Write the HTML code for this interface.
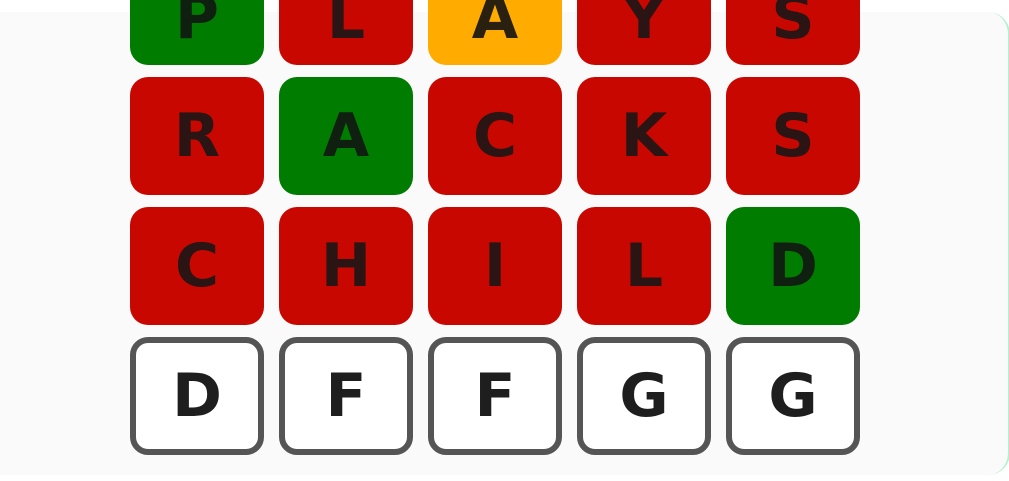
<!DOCTYPE html>
<html><head><style>
html,body{margin:0;padding:0;width:1009px;height:481px;overflow:hidden;background:#fff;}
.card{position:absolute;left:-20px;top:12px;width:1028px;height:463px;background:#fafafa;border-radius:22px;border-right:2px solid #b4f0cc;}
.t{position:absolute;width:134px;height:118px;border-radius:18px;display:flex;align-items:center;justify-content:center;font-family:"DejaVu Sans","Liberation Sans",sans-serif;font-weight:bold;font-size:60px;color:#2a1414;box-sizing:border-box;}
.g{background:#007c00;color:#102010}
.r{background:#c80800;}
.o{background:#ffab00;color:#2a2010}
.e{background:#fff;border:6px solid #555;color:#1e1e1e;}
.top{padding-top:24px;}
</style></head><body>
<div class="card"></div>
<div class="t g top" style="left:130px;top:-53px">P</div>
<div class="t r top" style="left:279px;top:-53px">L</div>
<div class="t o top" style="left:428px;top:-53px">A</div>
<div class="t r top" style="left:577px;top:-53px">Y</div>
<div class="t r top" style="left:726px;top:-53px">S</div>
<div class="t r" style="left:130px;top:77px">R</div>
<div class="t g" style="left:279px;top:77px">A</div>
<div class="t r" style="left:428px;top:77px">C</div>
<div class="t r" style="left:577px;top:77px">K</div>
<div class="t r" style="left:726px;top:77px">S</div>
<div class="t r" style="left:130px;top:207px">C</div>
<div class="t r" style="left:279px;top:207px">H</div>
<div class="t r" style="left:428px;top:207px">I</div>
<div class="t r" style="left:577px;top:207px">L</div>
<div class="t g" style="left:726px;top:207px">D</div>
<div class="t e" style="left:130px;top:337px">D</div>
<div class="t e" style="left:279px;top:337px">F</div>
<div class="t e" style="left:428px;top:337px">F</div>
<div class="t e" style="left:577px;top:337px">G</div>
<div class="t e" style="left:726px;top:337px">G</div>
</body></html>
